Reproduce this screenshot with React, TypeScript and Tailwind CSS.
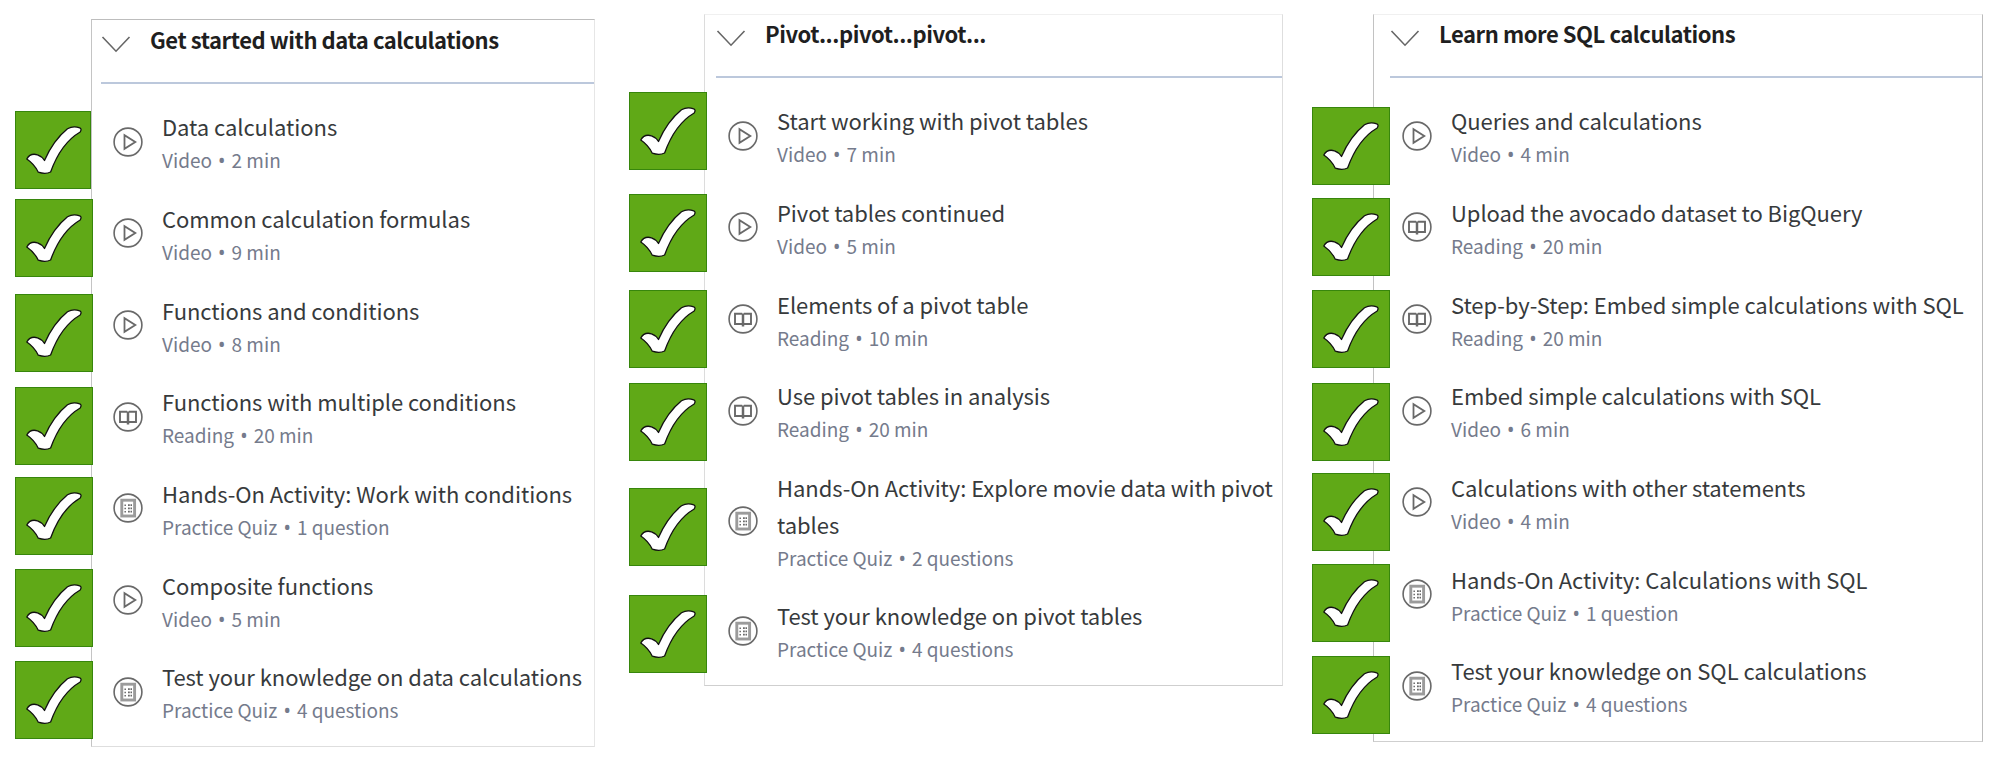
type Kind = 'Video' | 'Reading' | 'Practice Quiz';
type Lesson = { title: string; kind: Kind; length: string; check: string };
type Module = {
  title: string;
  section: string;
  checks: string;
  panel: string;
  lessons: Lesson[];
};

const modules: Module[] = [
  {
    title: 'Get started with data calculations',
    section: 'ml-[15px]',
    checks: 'w-[78px] -mr-[2px] pt-[111px]',
    panel: 'mt-[19px] h-[728px] w-[504px] pl-[9px] pt-px border-l-[#c4c4c4] border-t-[#bdbdbd] border-r-[#e6e6e6] border-b-[#dedede]',
    lessons: [
      { title: 'Data calculations', kind: 'Video', length: '2 min', check: 'w-[76px]' },
      { title: 'Common calculation formulas', kind: 'Video', length: '9 min', check: 'mt-[10px]' },
      { title: 'Functions and conditions', kind: 'Video', length: '8 min', check: 'mt-[17px]' },
      { title: 'Functions with multiple conditions', kind: 'Reading', length: '20 min', check: 'mt-[15px]' },
      { title: 'Hands-On Activity: Work with conditions', kind: 'Practice Quiz', length: '1 question', check: 'mt-[12px]' },
      { title: 'Composite functions', kind: 'Video', length: '5 min', check: 'mt-[14px]' },
      { title: 'Test your knowledge on data calculations', kind: 'Practice Quiz', length: '4 questions', check: 'mt-[14px]' },
    ],
  },
  {
    title: 'Pivot...pivot...pivot...',
    section: 'ml-[34px]',
    checks: 'w-[78px] -mr-[3px] pt-[92px]',
    panel: 'mt-[14px] h-[672px] w-[579px] pl-[11px] border-l-[#dcdcdc] border-t-[#f0f0f0] border-r-[#dedede] border-b-[#cfcfcf]',
    lessons: [
      { title: 'Start working with pivot tables', kind: 'Video', length: '7 min', check: '' },
      { title: 'Pivot tables continued', kind: 'Video', length: '5 min', check: 'mt-[24px]' },
      { title: 'Elements of a pivot table', kind: 'Reading', length: '10 min', check: 'mt-[18px]' },
      { title: 'Use pivot tables in analysis', kind: 'Reading', length: '20 min', check: 'mt-[15px]' },
      { title: 'Hands-On Activity: Explore movie data with pivot tables', kind: 'Practice Quiz', length: '2 questions', check: 'mt-[27px]' },
      { title: 'Test your knowledge on pivot tables', kind: 'Practice Quiz', length: '4 questions', check: 'mt-[29px]' },
    ],
  },
  {
    title: 'Learn more SQL calculations',
    section: 'ml-[29px]',
    checks: 'w-[78px] -mr-[17px] pt-[107px]',
    panel: 'mt-[14px] h-[728px] w-[610px] pl-[16px] border-l-[#c2c2c2] border-t-[#f0f0f0] border-r-[#bcbcbc] border-b-[#cfcfcf]',
    lessons: [
      { title: 'Queries and calculations', kind: 'Video', length: '4 min', check: '' },
      { title: 'Upload the avocado dataset to BigQuery', kind: 'Reading', length: '20 min', check: 'mt-[13px]' },
      { title: 'Step-by-Step: Embed simple calculations with SQL', kind: 'Reading', length: '20 min', check: 'mt-[14px]' },
      { title: 'Embed simple calculations with SQL', kind: 'Video', length: '6 min', check: 'mt-[15px]' },
      { title: 'Calculations with other statements', kind: 'Video', length: '4 min', check: 'mt-[12px]' },
      { title: 'Hands-On Activity: Calculations with SQL', kind: 'Practice Quiz', length: '1 question', check: 'mt-[13px]' },
      { title: 'Test your knowledge on SQL calculations', kind: 'Practice Quiz', length: '4 questions', check: 'mt-[14px]' },
    ],
  },
];

function DoneBadge({ className }: { className: string }) {
  return (
    <div className={`h-[78px] shrink-0 overflow-hidden border border-[#37860c] bg-[#60a917] ${className}`}>
      <svg width="76" height="76" viewBox="0 0 76 76" fill="none">
        <path
          d="M10.800 47C13 43 17 41.500 21.500 42.800C25 44 27 46 28.500 48.500C34 36 42 24.500 51.500 16.800C54.500 15 60 14.500 63.800 15.800C65.500 16.600 65.300 18.200 64.200 20C53 26.500 42 39.500 34.600 60C31.500 61.600 26.500 61.600 22.300 60.200C19.500 54.500 16 50.500 10.800 47Z"
          fill="#fff"
          stroke="#111"
          strokeWidth="1.3"
          strokeLinejoin="round"
        />
      </svg>
    </div>
  );
}

function KindIcon({ kind }: { kind: Kind }) {
  return (
    <svg width="30" height="30" viewBox="0 0 30 30" fill="none" stroke="#696969" strokeWidth="1.600" className="ml-[12px] shrink-0">
      <circle cx="15" cy="15" r="13.9" />
      {kind === 'Video' && <path d="M11.500 8.200V21.800L22.300 15Z" strokeWidth="1.800" />}
      {kind === 'Reading' && (
        <g>
          <path d="M14.200 9.800H7V20H14.200M15.800 9.800H23V20H15.800" strokeWidth="1.900" />
          <path d="M15 9.500V22.500" strokeWidth="2.500" />
        </g>
      )}
      {kind === 'Practice Quiz' && (
        <g>
          <rect x="8.800" y="7.200" width="12.800" height="15.800" stroke="#9b9b9b" strokeWidth="2.900" />
          <path d="M12.200 11.500V20" strokeDasharray="1.500 1.700" strokeWidth="1.500" />
          <path d="M15 12.200H19M15 15.400H19M15 18.600H19" strokeDasharray="1.800 0.700" strokeWidth="1.700" />
        </g>
      )}
    </svg>
  );
}

function LessonRow({ lesson, wraps }: { lesson: Lesson; wraps: boolean }) {
  return (
    <li className={`flex items-center ${wraps ? 'h-[128.3px]' : 'h-[91.67px]'}`}>
      <KindIcon kind={lesson.kind} />
      <div className="ml-[19px] flex min-w-0 flex-col">
        <span className="-mt-[3px] mb-[1.4px] pr-1 text-[22px] leading-[36.6px] tracking-[-0.06px] text-[#373a3c]">
          {lesson.title}
        </span>
        <span className="-mb-[2px] text-[19px] leading-[28px] text-[#757b8c]">
          {lesson.kind}{' '}
          <span className="inline-flex w-[11px] justify-center font-['Open_Sans',sans-serif] text-[21px] leading-none">•</span>{' '}
          {lesson.length}
        </span>
      </div>
    </li>
  );
}

export default function App() {
  return (
    <main className="flex h-[762px] w-[1999px] items-start overflow-hidden bg-white font-['Noto_Sans_CJK_SC',sans-serif]">
      {modules.map((m) => (
        <section key={m.title} className={`flex shrink-0 items-start ${m.section}`}>
          <div className={`relative z-10 flex shrink-0 flex-col ${m.checks}`}>
            {m.lessons.map((l) => (
              <DoneBadge key={l.title} className={l.check} />
            ))}
          </div>
          <div className={`shrink-0 border ${m.panel}`}>
            <header className="flex h-[63px] items-start border-b-2 border-[#bcc8dc]">
              <svg width="30" height="18" viewBox="0 0 30 18" fill="none" className="mt-[15px] shrink-0">
                <path d="M1.500 1L15 15.200L28.500 1" stroke="#666" strokeWidth="1.600" />
              </svg>
              <h2 className="ml-[19px] text-[22px] leading-[36px] font-bold tracking-[-0.44px] text-[#1f1f1f]">{m.title}</h2>
            </header>
            <ul className="pt-[12px]">
              {m.lessons.map((l) => (
                <LessonRow key={l.title} lesson={l} wraps={l.title.length > 50} />
              ))}
            </ul>
          </div>
        </section>
      ))}
    </main>
  );
}
